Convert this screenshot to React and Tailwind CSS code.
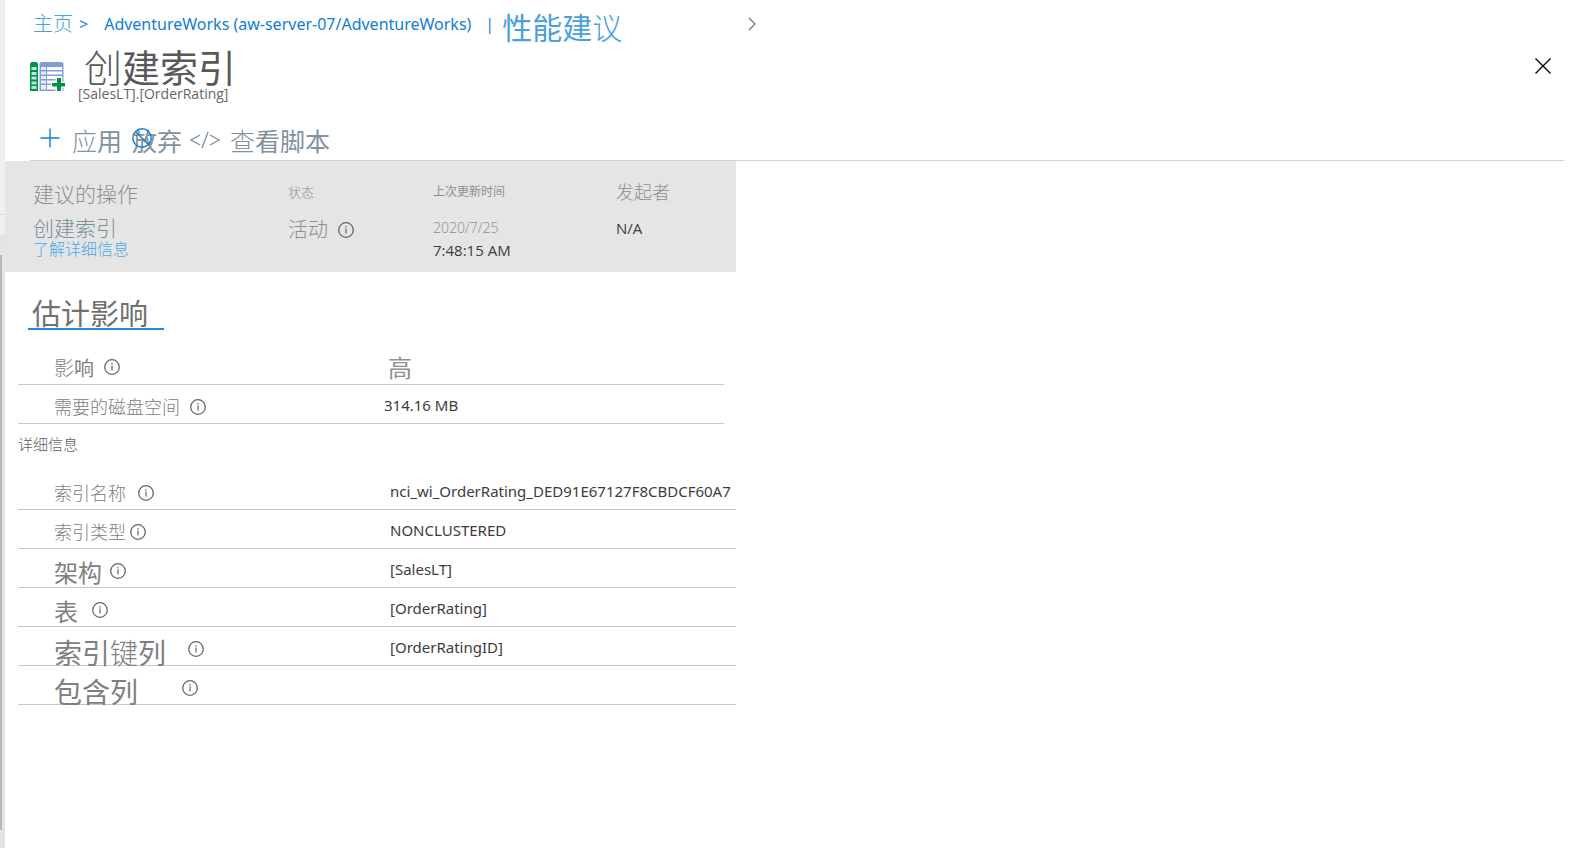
import { clsx } from 'clsx';

function InfoIcon() {
  return (
    <svg viewBox="0 0 16 16" className="size-4 shrink-0 text-[#666]" fill="none" stroke="currentColor" aria-hidden="true">
      <circle cx="8" cy="8" r="7.3" strokeWidth="1.3" />
      <path d="M8 6.500v5M8 4v1.4" strokeWidth="1.2" />
    </svg>
  );
}

function TableIcon() {
  return (
    <svg viewBox="0 0 36 30" className="h-[30px] w-9 shrink-0" aria-hidden="true">
      <path d="M1.500 0H6.500L8 1.500V29H0V1.500z" fill="#009245" />
      <path d="M1.500 5h5v3h-5zM1.500 10h5v3h-5zM1.500 14.500h5v3h-5zM1.500 19.500h5v3h-5zM1.500 24h5v3h-5z" fill="#b9e6df" />
      <path d="M11 0h21L33.500 1.500V29H9.500V1.500z" fill="#829fd4" />
      <path d="M11 5h5v3h-5zM11 9.500h5v3h-5zM11 14h5v3h-5zM11 18.500h5v3h-5zM11 23h5v4.500h-5z" fill="#e3f0fb" />
      <path d="M17 5h15v3H17zM17 9.500h15v3H17zM17 14h15v3H17zM17 18.500h15v3H17zM17 23h15v4.500H17z" fill="#fff" />
      <path d="M25.500 15h7v5H36v6h-3.500v4h-7v-4H21v-6h4.500z" fill="#fff" />
      <path d="M27 16h4v5h4v3.500h-4V29h-4v-4.500h-5V21h5z" fill="#009245" />
    </svg>
  );
}

function Breadcrumb() {
  return (
    <nav className="flex max-w-[751px] items-start pl-7 pt-3 text-[16px] leading-6 text-[#0f7dd4]">
      <a href="#home" className="text-[20px] font-light text-[#4a9fdf]">主页</a>
      <span className="ml-1.5">&gt;</span>
      <a href="#database" className="ml-4 whitespace-nowrap font-['Noto_Sans',sans-serif]">AdventureWorks (aw-server-07/AdventureWorks)</a>
      <span className="ml-3.5">|</span>
      <a href="#recommendations" className="ml-2 whitespace-nowrap text-[30px] leading-8 text-[#4a9fdf]">
        性能建<span className="font-light">议</span>
      </a>
      <svg viewBox="0 0 8 14" className="ml-auto mt-[5px] h-3.5 w-2" fill="none" stroke="#707070" strokeWidth="1.2" aria-hidden="true">
        <path d="M1 1l6 6-6 6" />
      </svg>
    </nav>
  );
}

function Toolbar() {
  return (
    <div className="mr-[17px] ml-[25px] flex h-[41px] items-start border-b border-[#d2d2d2] pl-2.5 pt-2 text-[25px] leading-[26px] text-[#82929e]">
      <button type="button" className="flex items-start">
        <svg viewBox="0 0 20 20" className="size-5" stroke="#0f7dd4" strokeWidth="1.4" aria-hidden="true">
          <path d="M10 0.500v19M0.500 10h19" />
        </svg>
        <span className="ml-3"><span className="font-light">应</span>用</span>
      </button>
      <button type="button" className="relative ml-2.5">
        <svg viewBox="0 0 20 20" className="absolute left-0 top-0 size-5" fill="none" stroke="#0f7dd4" strokeWidth="1.4" aria-hidden="true">
          <circle cx="10" cy="10" r="9.200" />
          <path d="M3.500 3.500l13 13" />
        </svg>
        放弃
      </button>
      <button type="button" className="ml-2 flex items-start">
        <svg viewBox="0 0 30 16" className="mt-1 h-4 w-[30px]" fill="none" stroke="#82929e" strokeWidth="1.4" aria-hidden="true">
          <path d="M10 3L1 8l9 5M20 3l9 5-9 5M18 0l-6 16" />
        </svg>
        <span className="ml-2.5"><span className="font-light">查</span>看脚本</span>
      </button>
    </div>
  );
}

function Summary() {
  return (
    <dl className="grid h-[111px] max-w-[731px] grid-cols-[255px_145px_183px_1fr] bg-[#e5e5e5] pl-7 pt-5 text-[15px] leading-[22px] text-[#8f8f8f]">
      <div>
        <dt className="mt-0.5 mb-3 text-[21px] font-light">建议的操作</dt>
        <dd className="text-[21px] font-light text-[#78909a]">创建索引</dd>
        <dd className="mt-0.5 text-[16px] font-light leading-4 text-[#4aa8e6]">
          <a href="#learn-more">了解详细信息</a>
        </dd>
      </div>
      <div>
        <dt className="mb-4 text-[13px] font-light">状态</dt>
        <dd className="flex items-center gap-2.5 text-[20px] font-light">活动 <InfoIcon /></dd>
      </div>
      <div>
        <dt className="mb-3.5 text-[12px]">上次更新时间</dt>
        <dd className="text-[14px] font-light">2020/7/25</dd>
        <dd className="text-[#3c3c3c]">7:48:15 AM</dd>
      </div>
      <div>
        <dt className="mb-3.5 text-[18px] font-light">发起者</dt>
        <dd className="text-[#3c3c3c]">N/A</dd>
      </div>
    </dl>
  );
}

const impactRows = [
  { label: <><span className="font-light">影</span>响</>, size: 'text-[20px]', drop: 'pt-1', gap: 'gap-2.5', value: '高', valueSize: 'pl-1 pt-2 text-[24px] leading-7 text-[#8f8f8f]' },
  { label: '需要的磁盘空间', size: 'text-[18px] font-light', gap: 'gap-2.5', value: '314.16 MB' },
];

const detailRows = [
  { label: '索引名称', size: 'text-[18px] font-light', gap: 'gap-3', value: 'nci_wi_OrderRating_DED91E67127F8CBDCF60A7' },
  { label: '索引类型', size: 'text-[18px] font-light', gap: 'gap-1', value: 'NONCLUSTERED' },
  { label: '架构', size: 'text-[24px]', drop: 'pt-1', gap: 'gap-2', value: '[SalesLT]' },
  { label: '表', size: 'text-[24px]', drop: 'pt-1', gap: 'gap-3.5', value: '[OrderRating]' },
  { label: <>索引<span className="font-light">键</span>列</>, size: 'text-[28px]', drop: 'pt-2', gap: 'gap-5.5', value: '[OrderRatingID]' },
  { label: '包含列', size: 'text-[28px]', drop: 'pt-2', gap: 'gap-11', value: '' },
];

function PropertyTable({ rows, className, labelWidth }) {
  return (
    <table className={clsx('table-fixed border-collapse text-left', className)}>
      <tbody>
        {rows.map((row, index) => (
          <tr key={index} className="h-[39px] border-b border-[#c8c8c8]">
            <th scope="row" className={clsx('p-0 pl-9 pt-1.5 font-normal text-[#808080]', labelWidth)}>
              <span className={clsx('flex h-8 items-center', row.size, row.gap)}>
                <span className={clsx('leading-none', row.drop)}>{row.label}</span>
                <InfoIcon />
              </span>
            </th>
            <td className={clsx('overflow-hidden whitespace-nowrap', row.valueSize || "pt-0.5 font-['Noto_Sans',sans-serif] text-[15px] leading-8 text-[#3c3c3c]")}>
              {row.value}
            </td>
          </tr>
        ))}
      </tbody>
    </table>
  );
}

export default function App() {
  return (
    <div className="flex min-h-screen bg-white font-['Open_Sans','Noto_Sans_CJK_SC',sans-serif]">
      <aside className="flex w-[5px] shrink-0 flex-col bg-[#e4e4e4]">
        <div className="h-[215px] border-b border-[#dcdcdc] bg-[#efefef]" />
        <div className="h-5 bg-[#efefef]" />
        <div className="mt-5 mb-[18px] w-0.5 flex-1 bg-[#b8b8b8]" />
      </aside>
      <main className="min-w-0 flex-1">
        <Breadcrumb />
        <header className="mt-1 flex h-[72px] items-start pl-[25px] pr-[30px]">
          <div className="mt-3.5"><TableIcon /></div>
          <div className="ml-3">
            <h1 className="pl-1.5 text-[38px] leading-[38px] text-[#595959]">
              <span className="font-light">创</span>建索引
            </h1>
            <p className="text-[14px] leading-4 text-[#666]">[SalesLT].[OrderRating]</p>
          </div>
          <button type="button" aria-label="关闭" className="ml-auto mt-2.5">
            <svg viewBox="0 0 16 16" className="size-4" stroke="#000" strokeWidth="1.3" aria-hidden="true">
              <path d="M0.500 0.500l15 15M15.500 0.500l-15 15" />
            </svg>
          </button>
        </header>
        <Toolbar />
        <Summary />
        <section className="max-w-[731px] pl-[13px]">
          <h2 className="ml-2.5 mt-6 inline-block border-b-2 border-[#2b8ad8] pl-1 pr-4 pt-1 text-[29px] leading-7 text-[#707070]">估计影响</h2>
          <PropertyTable rows={impactRows} className="mt-3.5 w-[706px] max-w-full" labelWidth="w-[366px]" />
          <h3 className="mt-2.5 mb-[17px] text-[15px] font-light leading-5 text-[#606060]">详细信息</h3>
          <PropertyTable rows={detailRows} className="w-full" labelWidth="w-[372px]" />
        </section>
      </main>
    </div>
  );
}
